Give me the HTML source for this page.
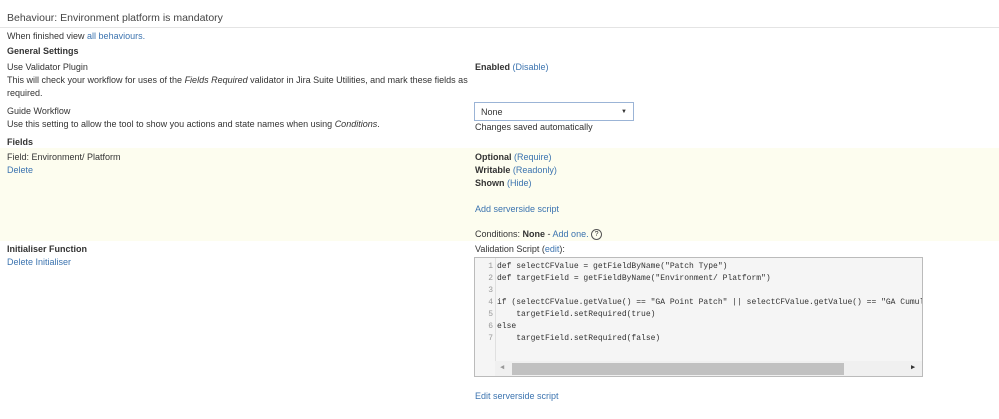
<!DOCTYPE html>
<html><head><style>
body{margin:0;width:999px;height:419px;background:#fff;font-family:"Liberation Sans",Arial,sans-serif;font-size:9px;color:#333;position:relative;overflow:hidden}
.a{position:absolute;white-space:nowrap;line-height:12px}
a,.l{color:#3b73af;text-decoration:none}
b{color:#333}
.code{position:absolute;left:474px;top:257px;width:447px;height:118px;border:1px solid #bbb;background:#f5f5f5;font-family:"Liberation Mono",monospace;font-size:8px;overflow:hidden}
.ln{position:absolute;left:0;top:3px;width:18px;text-align:right;color:#999;line-height:12px}
.cl{position:absolute;left:22px;top:3px;line-height:12px;white-space:pre;color:#333}
</style></head><body>
<div class="a" style="left:7px;top:12px;font-size:10.5px;color:#444">Behaviour: Environment platform is mandatory</div>
<div style="position:absolute;left:0;top:27px;width:999px;height:1px;background:#e4e4e4"></div>
<div class="a" style="left:7px;top:30px">When finished view <a>all behaviours.</a></div>
<div class="a" style="left:7px;top:45px"><b>General Settings</b></div>
<div class="a" style="left:7px;top:61px">Use Validator Plugin</div>
<div class="a" style="left:7px;top:74px">This will check your workflow for uses of the <i>Fields Required</i> validator in Jira Suite Utilities, and mark these fields as</div>
<div class="a" style="left:7px;top:87px">required.</div>
<div class="a" style="left:475px;top:61px"><b>Enabled</b> <a>(Disable)</a></div>
<div class="a" style="left:7px;top:105px">Guide Workflow</div>
<div class="a" style="left:7px;top:118px">Use this setting to allow the tool to show you actions and state names when using <i>Conditions</i>.</div>
<div style="position:absolute;left:474px;top:102px;width:160px;height:19px;border:1px solid #9bb4d6;box-sizing:border-box"></div>
<div class="a" style="left:481px;top:106px">None</div>
<div class="a" style="left:621px;top:106px;font-size:6px">▼</div>
<div class="a" style="left:475px;top:121px">Changes saved automatically</div>
<div class="a" style="left:7px;top:136px"><b>Fields</b></div>
<div style="position:absolute;left:0;top:148px;width:999px;height:93px;background:#fdfdef"></div>
<div class="a" style="left:7px;top:151px">Field: Environment/ Platform</div>
<div class="a" style="left:7px;top:164px"><a>Delete</a></div>
<div class="a" style="left:475px;top:151px"><b>Optional</b> <a>(Require)</a></div>
<div class="a" style="left:475px;top:164px"><b>Writable</b> <a>(Readonly)</a></div>
<div class="a" style="left:475px;top:177px"><b>Shown</b> <a>(Hide)</a></div>
<div class="a" style="left:475px;top:203px"><a>Add serverside script</a></div>
<div class="a" style="left:475px;top:228px">Conditions: <b>None</b> - <a>Add one.</a> <span style="display:inline-block;width:9px;height:9px;border:1px solid #555;border-radius:50%;font-size:7px;line-height:9px;text-align:center;vertical-align:middle">?</span></div>
<div class="a" style="left:7px;top:243px"><b>Initialiser Function</b></div>
<div class="a" style="left:7px;top:256px"><a>Delete Initialiser</a></div>
<div class="a" style="left:475px;top:243px">Validation Script (<a>edit</a>):</div>
<div class="code">
<div style="position:absolute;left:0;top:0;width:20px;height:118px;border-right:1px solid #e0e0e0"></div>
<div class="ln">1<br>2<br>3<br>4<br>5<br>6<br>7</div>
<div class="cl">def selectCFValue = getFieldByName("Patch Type")
def targetField = getFieldByName("Environment/ Platform")

if (selectCFValue.getValue() == "GA Point Patch" || selectCFValue.getValue() == "GA Cumulative")
    targetField.setRequired(true)
else
    targetField.setRequired(false)</div>
<div style="position:absolute;left:20px;top:103px;width:427px;height:15px;background:#f0f0f0"></div>
<div style="position:absolute;left:37px;top:105px;width:332px;height:12px;background:#c1c1c1"></div>
<div class="a" style="left:25px;top:104px;font-size:7px;color:#999">◀</div>
<div class="a" style="left:436px;top:104px;font-size:7px;color:#333">▶</div>
</div>
<div class="a" style="left:475px;top:390px"><a>Edit serverside script</a></div>
</body></html>
